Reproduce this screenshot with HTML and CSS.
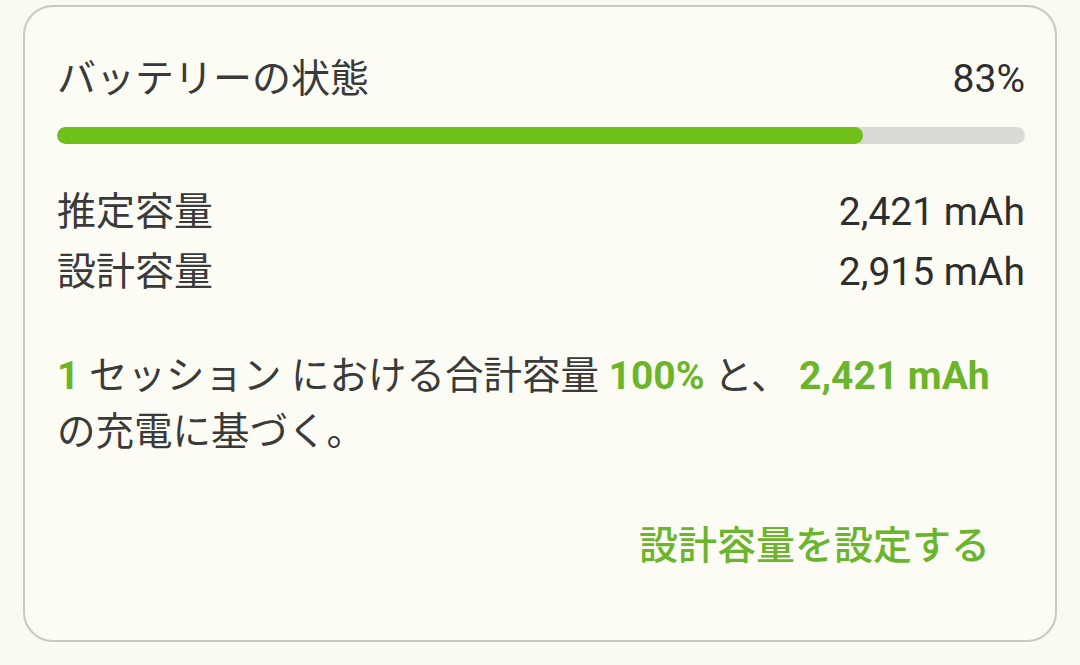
FILE: index.html
```html
<!DOCTYPE html>
<html lang="ja">
<head>
<meta charset="utf-8">
<link rel="stylesheet" href="styles.css">
</head>
<body>
<div class="card">
  <div class="head">
    <span class="title">バッテリーの状態</span>
    <span class="pct">83%</span>
  </div>
  <div class="bar"><div class="fill" style="width:83.3%"></div></div>
  <div class="rows">
    <div class="row"><span>推定容量</span><span class="num">2,421 mAh</span></div>
    <div class="row"><span>設計容量</span><span class="num">2,915 mAh</span></div>
  </div>
  <p class="note"><b class="hl">1</b> セッション における合計容量 <b class="hl">100%</b> と、 <b class="hl">2,421 mAh</b><br>の充電に基づく。</p>
  <div class="actions"><span class="btn">設計容量を設定する</span></div>
</div>
</body>
</html>
```
FILE: styles.css
```css
html, body {
  margin: 0;
  padding: 0;
  background: #fafaf3;
}
body {
  width: 1080px;
  height: 665px;
  overflow: hidden;
  font-family: Roboto, "Noto Sans CJK JP", sans-serif;
  color: #3a3a3a;
}
.card {
  box-sizing: border-box;
  margin: 5px 23px 0 23px;
  width: 1034px;
  height: 637px;
  border: 2px solid #c9c9c1;
  border-radius: 30px;
  background: #fcfcf5;
  padding: 46px 30px 0 32px;
}
.head {
  display: flex;
  justify-content: space-between;
  align-items: center;
  height: 52px;
  line-height: 52px;
}
.title {
  font-size: 39px;
}
.pct {
  font-size: 39px;
  color: #2e2e2e;
}
.bar {
  margin-top: 22px;
  height: 17px;
  border-radius: 9px;
  background: #d9d9d6;
  overflow: hidden;
}
.fill {
  height: 100%;
  background: #70c01a;
  border-radius: 9px;
}
.rows {
  margin-top: 38px;
}
.row {
  display: flex;
  justify-content: space-between;
  height: 60px;
  line-height: 60px;
  font-size: 39px;
}
.row .num {
  font-size: 39px;
  color: #2e2e2e;
}
.note {
  margin: 46px 0 0 0;
  font-size: 38.5px;
  line-height: 56px;
}
.hl {
  color: #6cb52a;
  font-weight: 700;
  font-size: 39px;
}
.actions {
  margin-top: 61px;
  display: flex;
  justify-content: flex-end;
  padding-right: 35px;
}
.btn {
  font-size: 39px;
  line-height: 50px;
  font-weight: 500;
  color: #6ab42e;
}
```
